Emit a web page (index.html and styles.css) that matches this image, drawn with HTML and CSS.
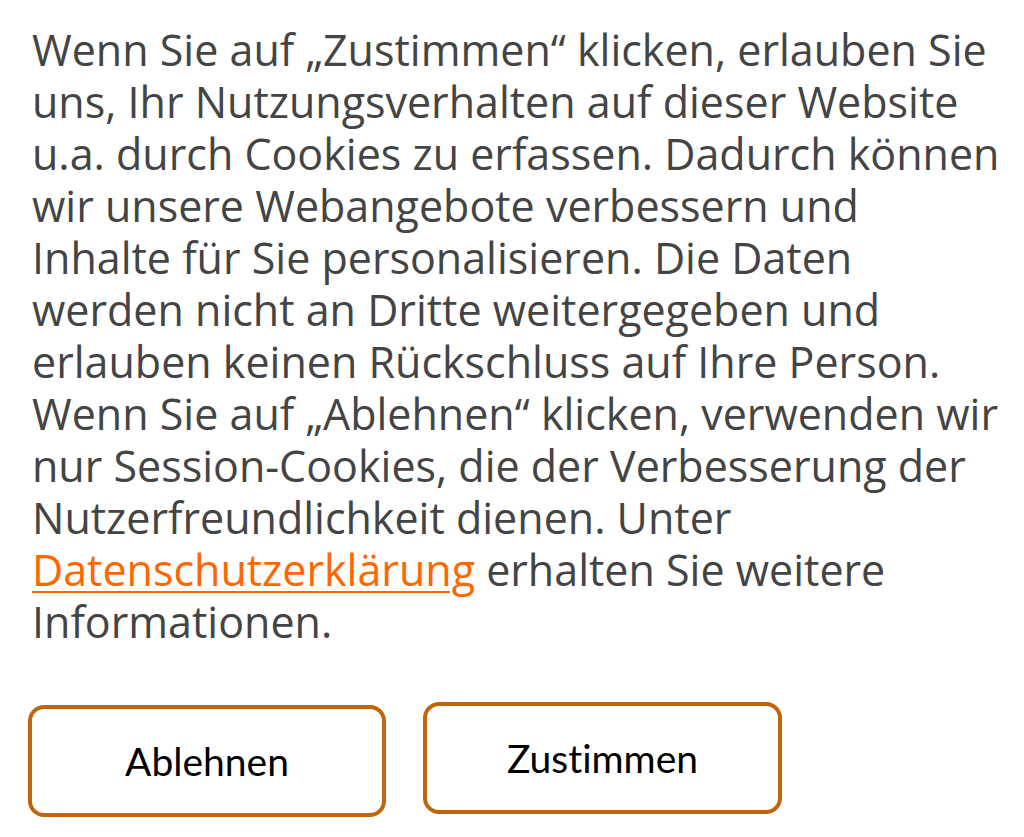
FILE: index.html
```html
<!DOCTYPE html>
<html lang="de">
<head>
    <meta charset="UTF-8">
    <meta name="viewport" content="width=device-width, initial-scale=1.0">
    <title>Cookie-Hinweis</title>
    <link rel="stylesheet" href="styles.css">
</head>
<body>
    <div class="consent">
        <p class="consent-text">
            Wenn Sie auf „Zustimmen“ klicken, erlauben Sie uns, Ihr Nutzungsverhalten auf dieser Website u.a. durch Cookies zu erfassen. Dadurch können wir unsere Webangebote verbessern und Inhalte für Sie personalisieren. Die Daten werden nicht an Dritte weitergegeben und erlauben keinen Rückschluss auf Ihre Person. Wenn Sie auf „Ablehnen“ klicken, verwenden wir nur Session-Cookies, die der Verbesserung der Nutzerfreundlichkeit dienen. Unter <a href="#" class="privacy-link">Datenschutzerklärung</a> erhalten Sie weitere Informationen.
        </p>

        <!-- Buttons -->
        <div class="consent-actions">
            <button class="consent-btn decline">Ablehnen</button>
            <button class="consent-btn accept">Zustimmen</button>
        </div>
    </div>
</body>
</html>
```

FILE: styles.css
```css
* {
    margin: 0;
    padding: 0;
    box-sizing: border-box;
}

body {
    font-family: "Open Sans", sans-serif;
    background-color: #fff;
    color: #444;
}

.consent {
    padding: 24px 19px 0 32px;
}

.consent-text {
    font-size: 43px;
    line-height: 52px;
}

.privacy-link {
    color: #ff6600;
    text-decoration: underline;
    text-decoration-thickness: 2px;
    text-underline-offset: 5px;
}

.consent-actions {
    display: flex;
    gap: 37px;
    align-items: flex-start;
    margin-top: 54px;
    margin-left: -4px;
}

.consent-btn {
    width: 358px;
    height: 112px;
    background-color: #fff;
    border: 4px solid #c0650d;
    border-radius: 16px;
    font-family: Lato, "Open Sans", sans-serif;
    font-size: 39px;
    font-variant-ligatures: none;
    color: #000;
    cursor: pointer;
}

.decline {
    margin-top: 3px;
}

.accept {
    width: 359px;
}
```
